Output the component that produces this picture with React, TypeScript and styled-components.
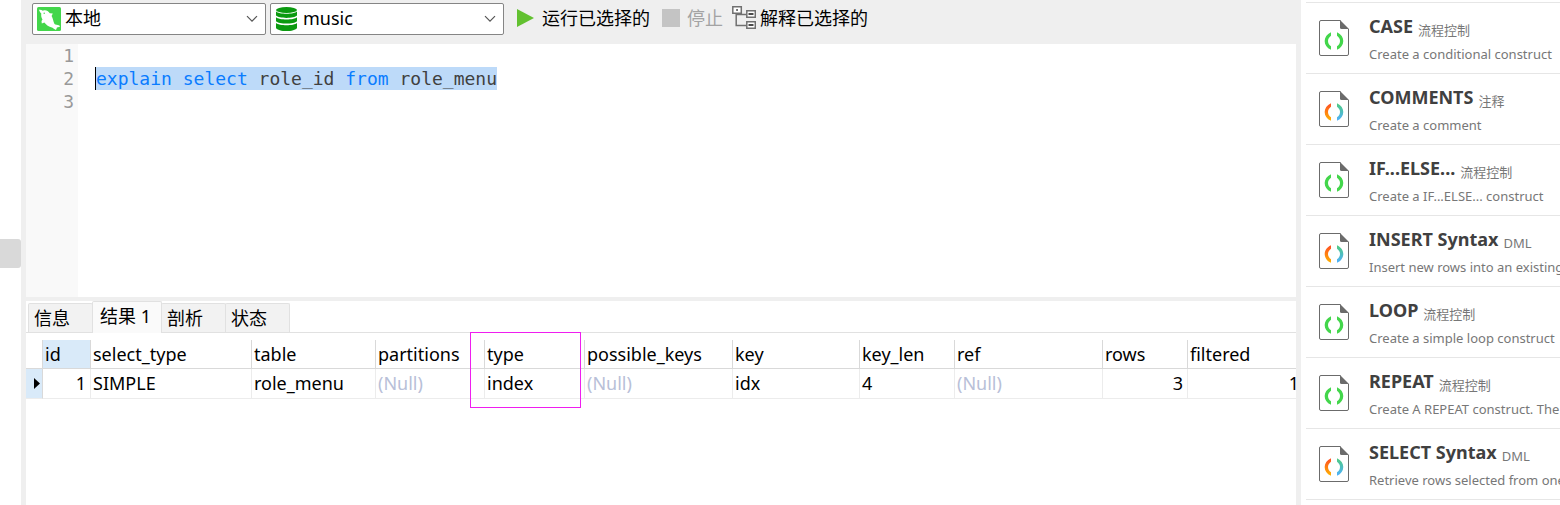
import React from "react";
import styled, { createGlobalStyle, css } from "styled-components";

const ui = `"Noto Sans", "Noto Sans CJK SC", sans-serif`;
const mono = `"DejaVu Sans Mono", "Liberation Mono", monospace`;

const GlobalStyle = createGlobalStyle`
  *, *::before, *::after { box-sizing: border-box; }
  body { margin: 0; background: #fff; font: 18px/24px ${ui}; color: #000; }
  button, select { font: inherit; color: inherit; }
`;

const Page = styled.div`
  display: flex;
  min-height: 100vh;
  overflow: hidden;
`;

const Rail = styled.div`
  flex: 0 0 21px;
  padding-top: 239px;
  background: #fff;
`;

const RailThumb = styled.div`
  height: 29px;
  background: #d9d9d9;
  border-radius: 0 3px 3px 0;
`;

const Workspace = styled.main`
  display: flex;
  flex: 1 1 0;
  flex-direction: column;
  min-width: 0;
  padding: 0 5px;
  background: #efefef;
`;

const Toolbar = styled.div`
  display: flex;
  align-items: flex-start;
  height: 44px;
  padding: 3px 6px;
  gap: 4px;
  white-space: nowrap;
`;

const Picker = styled.label`
  position: relative;
  width: 234px;
  height: 32px;
  svg { position: absolute; pointer-events: none; }
  svg:first-child { left: 5px; top: 4px; }
  svg:last-child { right: 8px; top: 12px; }
`;

const PickerSelect = styled.select`
  appearance: none;
  width: 100%;
  height: 32px;
  padding: 0 32px 2px;
  border: 1px solid #858585;
  border-radius: 2px;
  background: #fff;
  outline: none;
`;

const Actions = styled.div`
  display: flex;
  align-items: center;
  height: 30px;
  padding-left: 6px;
  gap: 9px;
`;

const ActionButton = styled.button`
  display: flex;
  align-items: center;
  gap: 4px;
  padding: 0;
  border: 0;
  background: none;
  svg { display: block; }
  &:disabled { color: #a3a3a3; }
`;

const Editor = styled.div`
  display: grid;
  grid-template-columns: 52px 1fr;
  height: 253px;
  background: #fff;
  font: 18px/23px ${mono};
`;

const Gutter = styled.ol`
  margin: 0;
  padding: 0 4px 0 0;
  list-style: none;
  text-align: right;
  color: #999;
  background: #f9f9f9;
`;

const Code = styled.div`
  padding-left: 17px;
  color: #404040;
  white-space: pre;
  outline: none;
`;

const CodeLine = styled.div`
  height: 23px;
`;

const Selected = styled.span`
  display: inline-block;
  height: 23px;
  border-left: 1px solid #000;
  background: #bddaf9;
`;

const Keyword = styled.span`
  color: #0a7cff;
`;

const Results = styled.section`
  flex: 1;
  margin-top: 4px;
  background: #fff;
  overflow: hidden;
`;

const TabStrip = styled.div`
  display: flex;
  align-items: flex-end;
  height: 32px;
  padding-left: 2px;
  border-bottom: 1px solid #e1e1e1;
`;

const Tab = styled.button<{ $active?: boolean }>`
  width: 65px;
  height: 29px;
  margin-right: -1px;
  padding: 0 5px;
  border: 1px solid #e1e1e1;
  border-bottom: 0;
  border-radius: 2px 2px 0 0;
  background: #f2f2f2;
  line-height: 28px;
  text-align: left;
  white-space: nowrap;
  ${(p) =>
    p.$active &&
    css`
      position: relative;
      align-self: flex-start;
      width: 70px;
      height: 32px;
      padding: 0 7px 3px;
      background: #fafafa;
    `}
`;

const GridArea = styled.div`
  position: relative;
  padding-top: 7px;
`;

const Grid = styled.table`
  width: max(100%, 1278px);
  table-layout: fixed;
  border-collapse: separate;
  border-spacing: 0;
  white-space: nowrap;
`;

const HeadCell = styled.th<{ $current?: boolean }>`
  height: 29px;
  padding: 0 2px;
  border-right: 1px solid #d9d9d9;
  border-bottom: 1px solid #d9d9d9;
  background: ${(p) => (p.$current ? "#d9eaf9" : "#fff")};
  font-weight: 400;
  text-align: left;
`;

const Cell = styled.td<{ $tone?: "null" | "number" | "marker" }>`
  height: 30px;
  padding: 0 2px 2px;
  border-right: 1px solid #ececec;
  border-bottom: 1px solid #ececec;
  ${(p) => p.$tone === "null" && css`color: #b8c0d8;`}
  ${(p) => p.$tone === "number" && css`padding-right: 4px; text-align: right;`}
  ${(p) => p.$tone === "marker" && css`
    padding: 0 2px 0 8px;
    border-right-color: #d9d9d9;
    background: #d9eaf9;
    svg { display: block; }
  `}
`;

const Highlight = styled.div`
  position: absolute;
  left: 444px;
  top: -1px;
  width: 111px;
  height: 76px;
  border: 1px solid #ef1eef;
  pointer-events: none;
`;

const Snippets = styled.aside`
  flex: 0 0 259px;
  min-width: 0;
  padding: 2px 0 0 5px;
  background: #fff;
  overflow: hidden;
`;

const SnippetList = styled.ul`
  margin: 0;
  padding: 0;
  border-top: 1px solid #e6e6e6;
  list-style: none;
`;

const SnippetItem = styled.li`
  display: flex;
  gap: 20px;
  height: 71px;
  padding: 11px 0 0 13px;
  border-bottom: 1px solid #e6e6e6;
  white-space: nowrap;
  svg { flex: none; margin-top: 6px; }
`;

const SnippetHead = styled.div`
  display: flex;
  align-items: flex-end;
  gap: 5px;
  height: 25px;
`;

const SnippetTitle = styled.h3`
  margin: 0;
  font-size: 18px;
  line-height: 25px;
  color: #404040;
`;

const SnippetKind = styled.small`
  font-size: 13px;
  line-height: 18px;
  color: #777;
`;

const SnippetText = styled.p`
  margin: 5px 0 0;
  font-size: 13px;
  line-height: 20px;
  color: #777;
`;

const Chevron = () => (
  <svg width="12" height="8" viewBox="0 0 12 8" fill="none" stroke="#555" strokeWidth="1.2" aria-hidden="true">
    <path d="M1 1.200 6 6.200l5-5" />
  </svg>
);

const DolphinIcon = () => (
  <svg width="24" height="24" viewBox="0 0 24 24" aria-hidden="true">
    <rect width="24" height="24" rx="1.5" fill="#43d64b" />
    <path
      fill="#fff"
      d="M2 2.800c1.500-.2 2.700.1 3.900.9C8.500 2.500 11 3.600 12.800 6.200l3 .3-1.200 2.600c1.300 2.300 1.600 5.400 2.900 7.800.9 1 2.700.8 4.900 1.500l.6 1.400-3 .7-1 2.500-2.200-1.200c-.8-.9-1.600-1.300-2.700-1.600-2.700-.7-5-2.400-6.800-4.700l-2.500 1-.3-2.500 1-1.500C4.200 10.500 4 8.600 4.300 6.500 3.200 5.500 2.300 4.300 2 2.800z"
    />
    <circle cx="7.200" cy="6.200" r=".7" fill="#43d64b" />
  </svg>
);

const DatabaseIcon = () => (
  <svg width="24" height="24" viewBox="0 0 24 24" fill="#0b9a10" aria-hidden="true">
    <ellipse cx="11.500" cy="3" rx="10.500" ry="3" />
    <path d="M1 4.500c3 3 18 3 21 0v4c-3 3.200-18 3.200-21 0z" />
    <path d="M1 10.200c3 3 18 3 21 0v4c-3 3.200-18 3.200-21 0z" />
    <path d="M1 15.900c3 3 18 3 21 0v5c-2 4.100-19 4.100-21 0z" />
  </svg>
);

const PlayIcon = () => (
  <svg width="24" height="24" viewBox="0 0 24 24" aria-hidden="true">
    <path d="M3 3l17 9-17 9z" fill="#62c130" />
  </svg>
);

const StopIcon = () => (
  <svg width="24" height="24" viewBox="0 0 24 24" aria-hidden="true">
    <path d="M3 3h18v18H3z" fill="#c4c4c4" />
  </svg>
);

const ExplainIcon = () => (
  <svg width="24" height="24" viewBox="0 0 24 24" fill="none" stroke="#707070" aria-hidden="true">
    <path strokeWidth="1.500" d="M4.200 7V19.500H14M4.200 8.500H14" />
    <g fill="#fff" strokeWidth="1.500">
      <path d="M.8.800h8.500v6.500H.8zM14.800 4.800h8.500v6.500h-8.500zM14.800 15.800h8.500v6.500h-8.500z" />
    </g>
    <path stroke="#111" strokeWidth="1.500" d="M4.300 4h1.500M16.500 8h5M16.500 19h5" />
  </svg>
);

const SnippetIcon = ({ color }: { color: boolean }) => (
  <svg width="30" height="36" viewBox="0 0 30 36" fill="none" aria-hidden="true">
    <defs>
      <linearGradient id="warm" x1="0" y1="0" x2="0" y2="1">
        <stop stopColor="#ff4b24" />
        <stop offset="1" stopColor="#ffb400" />
      </linearGradient>
      <linearGradient id="cool" x1="0" y1="0" x2="0" y2="1">
        <stop stopColor="#4fcb7d" />
        <stop offset="1" stopColor="#4fb0ff" />
      </linearGradient>
    </defs>
    <path d="M21.500.5H2A1.500 1.500 0 0 0 .5 2v32A1.500 1.500 0 0 0 2 35.500h26a1.500 1.500 0 0 0 1.500-1.500V9" stroke="#6b6b6b" />
    <path d="M21 0l9 9h-7.500A1.500 1.500 0 0 1 21 7.500z" fill="#6b6b6b" />
    <path d="M12 12.200C3.600 15.800 3.600 26.200 12 29.800V26.300C8 23.500 8 18.500 12 15.700z" fill={color ? "url(#warm)" : "#43d64b"} />
    <path d="M18 12.200C26.400 15.800 26.400 26.200 18 29.800V26.300C22 23.500 22 18.500 18 15.700z" fill={color ? "url(#cool)" : "#43d64b"} />
  </svg>
);

const snippets = [
  { title: "CASE", kind: "流程控制", text: "Create a conditional construct", color: false },
  { title: "COMMENTS", kind: "注释", text: "Create a comment", color: true },
  { title: "IF...ELSE...", kind: "流程控制", text: "Create a IF...ELSE... construct", color: false },
  { title: "INSERT Syntax", kind: "DML", text: "Insert new rows into an existing", color: true },
  { title: "LOOP", kind: "流程控制", text: "Create a simple loop construct", color: false },
  { title: "REPEAT", kind: "流程控制", text: "Create A REPEAT construct. The", color: false },
  { title: "SELECT Syntax", kind: "DML", text: "Retrieve rows selected from one", color: true },
];

type Column = { name: string; value: string; width?: number; numeric?: boolean };

const columns: Column[] = [
  { name: "id", value: "1", width: 48, numeric: true },
  { name: "select_type", value: "SIMPLE", width: 161 },
  { name: "table", value: "role_menu", width: 124 },
  { name: "partitions", value: "(Null)", width: 109 },
  { name: "type", value: "index", width: 100 },
  { name: "possible_keys", value: "(Null)", width: 148 },
  { name: "key", value: "idx", width: 127 },
  { name: "key_len", value: "4", width: 95 },
  { name: "ref", value: "(Null)", width: 148 },
  { name: "rows", value: "3", width: 85, numeric: true },
  { name: "filtered", value: "1", numeric: true },
];

const tone = (c: Column) => (c.numeric ? "number" : c.value === "(Null)" ? "null" : undefined);

export default function App() {
  return (
    <Page>
      <GlobalStyle />
      <Rail>
        <RailThumb />
      </Rail>
      <Workspace>
        <Toolbar>
          <Picker>
            <DolphinIcon />
            <PickerSelect aria-label="连接">
              <option>本地</option>
            </PickerSelect>
            <Chevron />
          </Picker>
          <Picker>
            <DatabaseIcon />
            <PickerSelect aria-label="数据库">
              <option>music</option>
            </PickerSelect>
            <Chevron />
          </Picker>
          <Actions>
            <ActionButton>
              <PlayIcon />
              运行已选择的
            </ActionButton>
            <ActionButton disabled>
              <StopIcon />
              停止
            </ActionButton>
            <ActionButton>
              <ExplainIcon />
              解释已选择的
            </ActionButton>
          </Actions>
        </Toolbar>
        <Editor>
          <Gutter>
            <li>1</li>
            <li>2</li>
            <li>3</li>
          </Gutter>
          <Code role="textbox" aria-multiline="true" aria-label="SQL" tabIndex={0}>
            <CodeLine />
            <CodeLine>
              <Selected>
                <Keyword>explain</Keyword> <Keyword>select</Keyword> role_id <Keyword>from</Keyword> role_menu
              </Selected>
            </CodeLine>
            <CodeLine />
          </Code>
        </Editor>
        <Results>
          <TabStrip role="tablist">
            <Tab role="tab">信息</Tab>
            <Tab role="tab" aria-selected="true" $active>
              结果 1
            </Tab>
            <Tab role="tab">剖析</Tab>
            <Tab role="tab">状态</Tab>
          </TabStrip>
          <GridArea>
            <Grid>
              <colgroup>
                <col width={17} />
                {columns.map((c) => (
                  <col key={c.name} width={c.width} />
                ))}
              </colgroup>
              <thead>
                <tr>
                  <HeadCell />
                  {columns.map((c, i) => (
                    <HeadCell key={c.name} $current={i === 0}>
                      {c.name}
                    </HeadCell>
                  ))}
                </tr>
              </thead>
              <tbody>
                <tr>
                  <Cell $tone="marker">
                    <svg width="6" height="11" viewBox="0 0 6 11" aria-hidden="true">
                      <path d="M0 0l6 5.500L0 11z" />
                    </svg>
                  </Cell>
                  {columns.map((c) => (
                    <Cell key={c.name} $tone={tone(c)}>
                      {c.value}
                    </Cell>
                  ))}
                </tr>
              </tbody>
            </Grid>
            <Highlight />
          </GridArea>
        </Results>
      </Workspace>
      <Snippets>
        <SnippetList>
          {snippets.map((s) => (
            <SnippetItem key={s.title}>
              <SnippetIcon color={s.color} />
              <div>
                <SnippetHead>
                  <SnippetTitle>{s.title}</SnippetTitle>
                  <SnippetKind>{s.kind}</SnippetKind>
                </SnippetHead>
                <SnippetText>{s.text}</SnippetText>
              </div>
            </SnippetItem>
          ))}
        </SnippetList>
      </Snippets>
    </Page>
  );
}
